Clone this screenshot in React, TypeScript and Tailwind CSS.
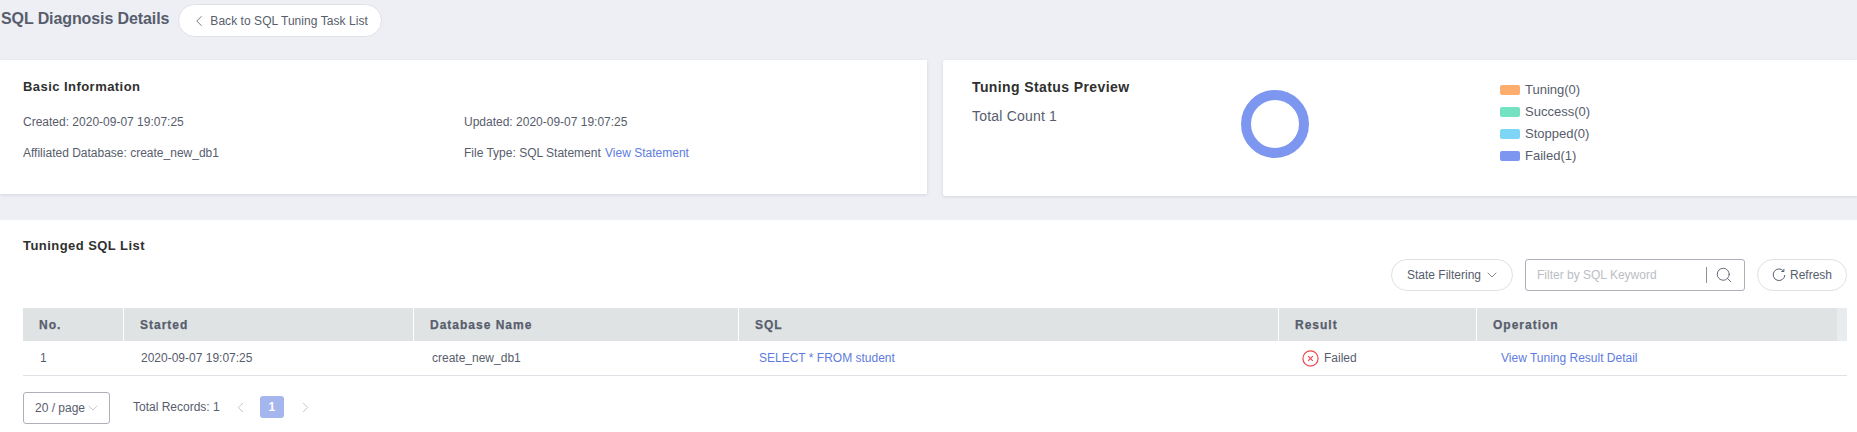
import { ChevronDown, ChevronLeft, ChevronRight, Search } from "lucide-react";

const legend = [
  { label: "Tuning(0)", color: "bg-[#fdae6f]" },
  { label: "Success(0)", color: "bg-[#73e2c3]" },
  { label: "Stopped(0)", color: "bg-[#7fd5f5]" },
  { label: "Failed(1)", color: "bg-[#7d96f0]" },
];

const columns = ["No.", "Started", "Database Name", "SQL", "Result", "Operation"];
const gridCols = "grid grid-cols-[100px_290px_325px_540px_198px_1fr]";

function RefreshIcon() {
  return (
    <svg width="14" height="14" viewBox="0 0 14 14" fill="none" stroke="#575d6c" strokeWidth="1">
      <path d="M11.6 3.2A5.8 5.8 0 1 0 12.8 7" />
      <path d="M11.9 0.9v2.6H9.3" />
    </svg>
  );
}

function FailedIcon() {
  return (
    <svg width="17" height="17" viewBox="0 0 17 17" fill="none" stroke="#f0444e" strokeWidth="1.2">
      <circle cx="8.5" cy="8.5" r="7.6" />
      <path d="M6.2 6.2l4.6 4.6M10.8 6.2l-4.6 4.6" />
    </svg>
  );
}

export default function App() {
  return (
    <div className="flex h-[432px] w-[1857px] flex-col overflow-hidden bg-[#eeeff5] text-[12px] text-[#575d6c] [font-family:'Liberation_Sans',Arial,sans-serif]">
      {/* header */}
      <div className="flex h-[60px] items-start pl-px pt-[4px]">
        <h1 className="mt-[4px] text-[16px] leading-[22px] font-bold tracking-[-0.1px] text-[#575d6c]">SQL Diagnosis Details</h1>
        <button className="ml-[9px] flex h-[33px] w-[204px] items-center gap-[2px] rounded-full border border-[#dfe1e6] bg-white pl-[11px] tracking-[0.05px]">
          <ChevronLeft size={18} strokeWidth={1.1} />
          Back to SQL Tuning Task List
        </button>
      </div>

      {/* top cards */}
      <div className="flex items-start gap-[16px]">
        <div className="h-[134px] w-[927px] bg-white px-[23px] pt-[18px] shadow-[0_1px_3px_rgba(37,43,58,0.12)]">
          <h2 className="text-[13px] leading-[18px] font-bold tracking-[0.45px] text-[#303030]">Basic Information</h2>
          <div className="mt-[18px] grid grid-cols-[441px_1fr] gap-y-[15px] leading-[16px]">
            <div>Created: 2020-09-07 19:07:25</div>
            <div>Updated: 2020-09-07 19:07:25</div>
            <div>Affiliated Database: create_new_db1</div>
            <div>
              File Type: SQL Statement <span className="ml-px text-[#5e7ce0]">View Statement</span>
            </div>
          </div>
        </div>

        <div className="flex h-[136px] flex-1 rounded-l-[2px] bg-white pt-[17px] pl-[29px] shadow-[0_1px_3px_rgba(37,43,58,0.12)]">
          <div className="w-[269px]">
            <h2 className="text-[14px] leading-[20px] font-bold tracking-[0.4px] text-[#303030]">Tuning Status Preview</h2>
            <p className="mt-[9px] text-[14px] leading-[20px] tracking-[0.2px]">Total Count 1</p>
          </div>
          <svg width="68" height="68" viewBox="0 0 68 68" className="mt-[13px]">
            <circle cx="34" cy="34" r="29" fill="none" stroke="#7d96f0" strokeWidth="10" />
          </svg>
          <div className="ml-[191px] flex flex-col gap-[6px] pt-[5px]">
            {legend.map((item) => (
              <div key={item.label} className="flex h-[16px] items-center gap-[5px] text-[13px] text-[#575d6c]">
                <span className={`h-[10px] w-[20px] rounded-[2px] ${item.color}`} />
                {item.label}
              </div>
            ))}
          </div>
        </div>
      </div>

      {/* list card */}
      <div className="mt-[24px] flex-1 bg-white px-[10px] pl-[23px] pt-[17px]">
        <h2 className="text-[13px] leading-[18px] font-bold tracking-[0.45px] text-[#303030]">Tuninged SQL List</h2>

        <div className="mt-[4px] flex items-center justify-end">
          <button className="flex h-[32px] w-[122px] items-center gap-[3px] rounded-full border border-[#dfe1e6] pl-[15px]">
            State Filtering
            <ChevronDown size={16} strokeWidth={1.1} />
          </button>
          <div className="ml-[12px] flex h-[32px] w-[220px] items-center rounded-[3px] border border-[#adb0b8] pl-[11px] pr-[11px]">
            <span className="flex-1 text-[#bbbec4]">Filter by SQL Keyword</span>
            <span className="mr-[8px] h-[16px] w-px bg-[#8a8e99]" />
            <Search size={18} strokeWidth={1.2} />
          </div>
          <button className="ml-[12px] flex h-[32px] w-[90px] items-center justify-center gap-[4px] rounded-full border border-[#dfe1e6]">
            <RefreshIcon />
            Refresh
          </button>
        </div>

        <div className={`${gridCols} relative mt-[17px] h-[33px] bg-[#dfe3e4] pr-[10px]`}>
          {columns.map((col, i) => (
            <div
              key={col}
              className={`flex items-center border-white font-bold tracking-[1px] text-[#575d6c] [-webkit-text-stroke:0.25px_#575d6c] ${i === 0 ? "pl-[16px]" : "border-l pl-[16px]"}`}
            >
              {col}
            </div>
          ))}
          <span className="absolute top-0 right-0 h-full w-[10px] bg-[#e9ecef]" />
        </div>
        <div className={`${gridCols} h-[35px] items-center border-b border-[#dfe1e6]`}>
          <div className="pl-[17px]">1</div>
          <div className="pl-[18px]">2020-09-07 19:07:25</div>
          <div className="pl-[19px]">create_new_db1</div>
          <div className="pl-[21px] text-[#5e7ce0]">SELECT * FROM student</div>
          <div className="flex items-center gap-[5px] pl-[24px]">
            <FailedIcon />
            Failed
          </div>
          <div className="pl-[25px] text-[#5e7ce0]">View Tuning Result Detail</div>
        </div>

        <div className="mt-[16px] flex items-start">
          <div className="flex h-[32px] w-[87px] items-center rounded-[3px] border border-[#adb0b8] pl-[11px]">
            20 / page
            <ChevronDown size={16} strokeWidth={1} className="text-[#adb0b8]" />
          </div>
          <span className="ml-[23px] mt-[7px] leading-[16px]">Total Records: 1</span>
          <ChevronLeft size={17} strokeWidth={1} className="ml-[12px] mt-[7px] text-[#adb0b8]" />
          <span className="ml-[11px] mt-[4px] flex h-[22px] w-[24px] items-center justify-center rounded-[3px] bg-[#a5b5ee] font-bold text-white">1</span>
          <ChevronRight size={17} strokeWidth={1} className="ml-[13px] mt-[7px] text-[#adb0b8]" />
        </div>
      </div>
    </div>
  );
}
